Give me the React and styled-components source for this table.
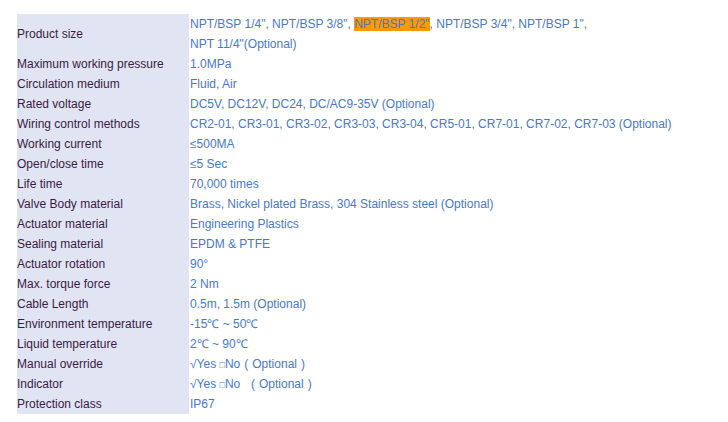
import React from "react";
import styled, { createGlobalStyle } from "styled-components";

const Global = createGlobalStyle`
  html, body { margin: 0; padding: 0; background: #fff; }
  body { font-family: "Liberation Sans", Arial, sans-serif; }
`;

const Page = styled.div`
  padding: 14px 0 0 17px;
`;

const Table = styled.div`
  display: grid;
  grid-template-columns: 172px 500px;
  grid-template-rows: 40px;
  grid-auto-rows: 20px;
  font-size: 12px;
  line-height: 20px;
`;

const Label = styled.div`
  background: #e1e5f3;
  color: #3a1a45;
  display: flex;
  align-items: center;
  white-space: nowrap;
  overflow: hidden;
`;

const Value = styled.div`
  color: #4a78c2;
  padding-left: 1px;
  white-space: nowrap;
  overflow: hidden;
`;

const Mark = styled.span`
  background: #ff9900;
`;

const Box = styled.span`
  font-size: 9px;
`;

const Paren = styled.span`
  font-family: "Liberation Sans", Arial, sans-serif;
  padding: 0 4px;
`;

const rows = [
  ["Maximum working pressure", "1.0MPa"],
  ["Circulation medium", "Fluid, Air"],
  ["Rated voltage", "DC5V, DC12V, DC24, DC/AC9-35V (Optional)"],
  ["Wiring control methods", "CR2-01, CR3-01, CR3-02, CR3-03, CR3-04, CR5-01, CR7-01, CR7-02, CR7-03 (Optional)"],
  ["Working current", "≤500MA"],
  ["Open/close time", "≤5 Sec"],
  ["Life time", "70,000 times"],
  ["Valve Body material", "Brass, Nickel plated Brass, 304 Stainless steel (Optional)"],
  ["Actuator material", "Engineering Plastics"],
  ["Sealing material", "EPDM & PTFE"],
  ["Actuator rotation", "90°"],
  ["Max. torque force", "2 Nm"],
  ["Cable Length", "0.5m, 1.5m (Optional)"],
  ["Environment temperature", "-15℃ ~ 50℃"],
  ["Liquid temperature", "2℃ ~ 90℃"],
];

export default function App() {
  return (
    <>
      <Global />
      <Page>
        <Table>
          <Label>Product size</Label>
          <Value>
            NPT/BSP 1/4", NPT/BSP 3/8", <Mark>NPT/BSP 1/2"</Mark>, NPT/BSP 3/4", NPT/BSP 1",
            <br />
            NPT 11/4"(Optional)
          </Value>
          {rows.map(([l, v]) => (
            <React.Fragment key={l}>
              <Label>{l}</Label>
              <Value>{v}</Value>
            </React.Fragment>
          ))}
          <Label>Manual override</Label>
          <Value>√Yes <Box>□</Box>No<Paren>(</Paren>Optional<Paren>)</Paren></Value>
          <Label>Indicator</Label>
          <Value>√Yes <Box>□</Box>No &nbsp;<Paren>(</Paren>Optional<Paren>)</Paren></Value>
          <Label>Protection class</Label>
          <Value>IP67</Value>
        </Table>
      </Page>
    </>
  );
}
